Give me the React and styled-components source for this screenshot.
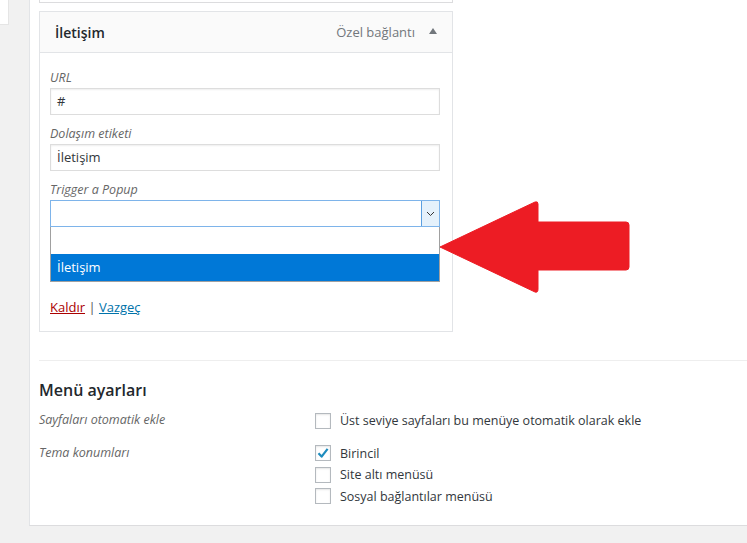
import React from 'react';
import styled, { createGlobalStyle } from 'styled-components';

const GlobalStyle = createGlobalStyle`
  html, body {
    margin: 0;
    padding: 0;
    background: #f1f1f1;
  }
  body {
    font-family: "Open Sans", "Noto Sans", sans-serif;
    font-size: 12.5px;
    color: #444;
  }
  * {
    box-sizing: border-box;
  }
`;

const Page = styled.div`
  display: flex;
  width: 747px;
  height: 543px;
  overflow: hidden;
  background: #f1f1f1;
`;

const Sidebar = styled.div`
  width: 29px;
  flex-shrink: 0;
`;

const SideCard = styled.div`
  width: 9px;
  height: 25px;
  background: #fff;
  border-right: 1px solid #e5e5e5;
  border-bottom: 1px solid #e5e5e5;
`;

const Main = styled.div`
  flex: 1;
  height: 526px;
  background: #fff;
  border-left: 1px solid #e2e4e7;
  border-bottom: 1px solid #dcdcde;
  padding-left: 9px;
  position: relative;
`;

const PrevItem = styled.div`
  width: 414px;
  height: 3px;
  border: 1px solid #dcdcde;
  border-top: none;
`;

const ItemBox = styled.div`
  width: 414px;
  margin-top: 8px;
  border: 1px solid #e2e4e7;
`;

const ItemHeader = styled.div`
  height: 41px;
  display: flex;
  align-items: center;
  padding: 0 15px;
  background: #fafafa;
  border-bottom: 1px solid #e2e4e7;
`;

const ItemTitle = styled.div`
  flex: 1;
  font-size: 14px;
  font-weight: 600;
  color: #23282d;
`;

const ItemType = styled.div`
  font-size: 13px;
  color: #72777c;
  margin-right: 14px;
`;

const Caret = styled.div`
  width: 0;
  height: 0;
  border-left: 4px solid transparent;
  border-right: 4px solid transparent;
  border-bottom: 6px solid #72777c;
  margin-bottom: 2px;
`;

const ItemBody = styled.div`
  padding: 15px 10px 14px 10px;
`;

const Field = styled.div`
  margin-top: ${(p) => (p.$first ? 0 : 9)}px;
  position: relative;
`;

const Label = styled.div`
  font-style: italic;
  color: #666;
  line-height: 20px;
  height: 20px;
`;

const TextInput = styled.div`
  width: 390px;
  height: 27px;
  border: 1px solid #ddd;
  box-shadow: inset 0 1px 2px rgba(0, 0, 0, 0.07);
  padding: 0 6px;
  line-height: 25px;
  font-size: 13px;
  color: #32373c;
`;

const Select = styled.div`
  width: 390px;
  height: 27px;
  border: 1px solid #7eb4ea;
  display: flex;
  justify-content: flex-end;
  background: #fff;
`;

const SelectArrow = styled.div`
  width: 18px;
  background: #e5f1fb;
  border-left: 1px solid #5b9fe0;
  display: flex;
  align-items: center;
  justify-content: center;
`;

const OptionList = styled.div`
  position: absolute;
  top: 47px;
  left: 0;
  width: 390px;
  border: 1px solid #a0a0a0;
  border-top: none;
  background: #fff;
  z-index: 2;
`;

const Option = styled.div`
  height: 27px;
  line-height: 27px;
  padding: 0 6px;
  font-size: 13px;
  background: ${(p) => (p.$selected ? '#0078d7' : '#fff')};
  color: ${(p) => (p.$selected ? '#fff' : '#000')};
`;

const Actions = styled.div`
  margin-top: 70px;
  line-height: 20px;
  font-size: 13px;
  color: #555;
`;

const Link = styled.a`
  color: ${(p) => (p.$danger ? '#a00' : '#0073aa')};
  text-decoration: underline;
`;

const Separator = styled.div`
  margin-top: 28px;
  border-top: 1px solid #eee;
`;

const SettingsTitle = styled.h3`
  margin: 18px 0 9px 0;
  font-size: 16px;
  font-weight: 600;
  line-height: 22px;
  color: #23282d;
`;

const SettingRow = styled.div`
  display: grid;
  grid-template-columns: 276px 1fr;
  margin-bottom: ${(p) => p.$gap || 0}px;
`;

const SettingLabel = styled.div`
  font-style: italic;
  color: #666;
  line-height: 20px;
`;

const ChoiceList = styled.div`
  display: flex;
  flex-direction: column;
`;

const Choice = styled.label`
  display: flex;
  align-items: center;
  height: 21.5px;
  color: #32373c;
`;

const Box = styled.span`
  width: 16px;
  height: 16px;
  border: 1px solid #b4b9be;
  background: #fff;
  box-shadow: inset 0 1px 2px rgba(0, 0, 0, 0.1);
  margin-right: 9px;
  display: flex;
  align-items: center;
  justify-content: center;
`;

const ArrowOverlay = styled.svg`
  position: absolute;
  left: 381px;
  top: 201px;
`;

const Check = ({ checked, children }) => (
  <Choice>
    <Box>
      {checked && (
        <svg width="14" height="14" viewBox="0 0 14 14">
          <path d="M2.5 7.2 L5.6 10.6 L11.6 2.8" fill="none" stroke="#1e8cbe" strokeWidth="2.2" strokeLinejoin="round" />
        </svg>
      )}
    </Box>
    {children}
  </Choice>
);

export default function App() {
  return (
    <Page>
      <GlobalStyle />
      <Sidebar>
        <SideCard />
      </Sidebar>
      <Main>
        <PrevItem />
        <ItemBox>
          <ItemHeader>
            <ItemTitle>İletişim</ItemTitle>
            <ItemType>Özel bağlantı</ItemType>
            <Caret />
          </ItemHeader>
          <ItemBody>
            <Field $first>
              <Label>URL</Label>
              <TextInput>#</TextInput>
            </Field>
            <Field>
              <Label>Dolaşım etiketi</Label>
              <TextInput>İletişim</TextInput>
            </Field>
            <Field>
              <Label>Trigger a Popup</Label>
              <Select>
                <SelectArrow>
                  <svg width="9" height="6" viewBox="0 0 9 6">
                    <path d="M1 1 L4.5 4.5 L8 1" fill="none" stroke="#333" strokeWidth="1" />
                  </svg>
                </SelectArrow>
              </Select>
              <OptionList>
                <Option />
                <Option $selected>İletişim</Option>
              </OptionList>
            </Field>
            <Actions>
              <Link $danger>Kaldır</Link> | <Link>Vazgeç</Link>
            </Actions>
          </ItemBody>
        </ItemBox>
        <Separator />
        <SettingsTitle>Menü ayarları</SettingsTitle>
        <SettingRow $gap={11}>
          <SettingLabel>Sayfaları otomatik ekle</SettingLabel>
          <ChoiceList>
            <Check>Üst seviye sayfaları bu menüye otomatik olarak ekle</Check>
          </ChoiceList>
        </SettingRow>
        <SettingRow>
          <SettingLabel>Tema konumları</SettingLabel>
          <ChoiceList>
            <Check checked>Birincil</Check>
            <Check>Site altı menüsü</Check>
            <Check>Sosyal bağlantılar menüsü</Check>
          </ChoiceList>
        </SettingRow>
        <ArrowOverlay width="222" height="94" viewBox="0 0 222 94">
          <path
            d="M29 46 L124 1 Q127 0 127 3 L127 21 L215 21 Q218 21 218 24 L218 66 Q218 69 215 69 L127 69 L127 88 Q127 92 124 91 Z"
            fill="#ed1c24"
            stroke="#ed1c24"
            strokeWidth="1"
            strokeLinejoin="round"
          />
        </ArrowOverlay>
      </Main>
    </Page>
  );
}
